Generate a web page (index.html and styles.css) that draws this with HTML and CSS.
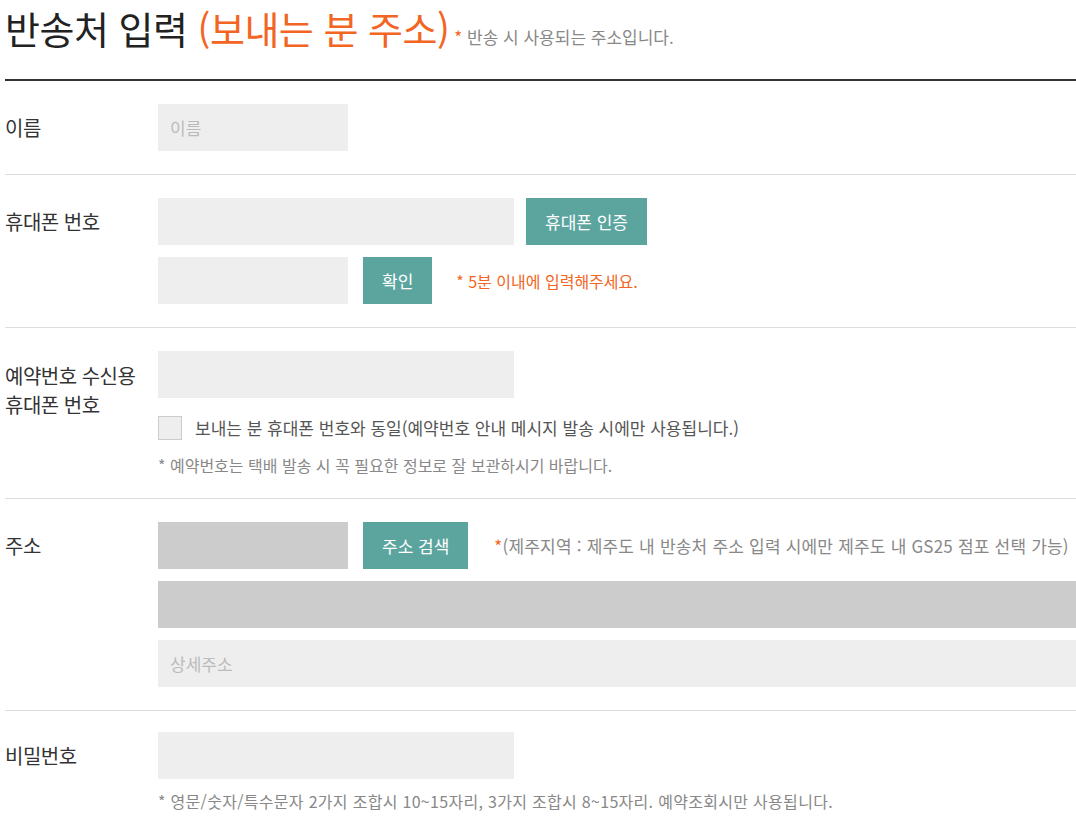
FILE: index.html
```html
<!DOCTYPE html>
<html lang="ko">
<head>
    <meta charset="UTF-8">
    <meta name="viewport" content="width=device-width, initial-scale=1.0">
    <title>반송처 입력</title>
    <link rel="stylesheet" href="styles.css">
</head>
<body>
    <div class="page">
        <div class="title-bar">
            <h2 class="title">반송처 입력 <span class="accent">(보내는 분 주소)</span></h2>
            <span class="title-note"><em>*</em> 반송 시 사용되는 주소입니다.</span>
        </div>

        <div class="row">
            <div class="label">이름</div>
            <div class="field">
                <div class="line">
                    <input class="input short" type="text" placeholder="이름">
                </div>
            </div>
        </div>

        <div class="row">
            <div class="label">휴대폰 번호</div>
            <div class="field">
                <div class="line">
                    <input class="input mid" type="text">
                    <button class="btn">휴대폰 인증</button>
                </div>
                <div class="line">
                    <input class="input short" type="text">
                    <button class="btn gap">확인</button>
                    <span class="warn">* 5분 이내에 입력해주세요.</span>
                </div>
            </div>
        </div>

        <div class="row">
            <div class="label two">예약번호 수신용<br>휴대폰 번호</div>
            <div class="field">
                <div class="line">
                    <input class="input mid" type="text">
                </div>
                <label class="check">
                    <span class="box"></span>
                    보내는 분 휴대폰 번호와 동일(예약번호 안내 메시지 발송 시에만 사용됩니다.)
                </label>
                <p class="note spaced">* 예약번호는 택배 발송 시 꼭 필요한 정보로 잘 보관하시기 바랍니다.</p>
            </div>
        </div>

        <div class="row">
            <div class="label">주소</div>
            <div class="field">
                <div class="line">
                    <input class="input short locked" type="text" readonly>
                    <button class="btn gap">주소 검색</button>
                    <span class="hint"><em>*</em>(제주지역 : 제주도 내 반송처 주소 입력 시에만 제주도 내 GS25 점포 선택 가능)</span>
                </div>
                <div class="line">
                    <input class="input full locked" type="text" readonly>
                </div>
                <div class="line">
                    <input class="input full" type="text" placeholder="상세주소">
                </div>
            </div>
        </div>

        <div class="row last">
            <div class="label">비밀번호</div>
            <div class="field">
                <div class="line">
                    <input class="input mid" type="password">
                </div>
                <p class="note wide">* 영문/숫자/특수문자 2가지 조합시 10~15자리, 3가지 조합시 8~15자리. 예약조회시만 사용됩니다.</p>
            </div>
        </div>
    </div>
</body>
</html>
```

FILE: styles.css
```css
body {
    margin: 0;
    background-color: #fff;
    font-family: "Noto Sans CJK KR", "Noto Sans", sans-serif;
    color: #333;
}

.page {
    margin-left: 5px;
}

.title-bar {
    display: flex;
    align-items: baseline;
    padding: 0 0 23px;
    border-bottom: 2px solid #333;
}

.title {
    margin: 0;
    font-size: 38px;
    font-weight: 400;
    line-height: 56px;
    color: #222;
    letter-spacing: -0.5px;
}

.title .accent {
    color: #f26522;
}

.title-note {
    margin-left: 5px;
    font-size: 17px;
    color: #888;
}

.title-note em,
.hint em {
    font-style: normal;
    color: #f26522;
}

.row {
    display: flex;
    padding: 23px 0;
    border-bottom: 1px solid #ddd;
}

.row.last {
    padding-top: 21px;
}

.label {
    width: 153px;
    flex-shrink: 0;
    font-size: 20px;
    line-height: 47px;
    color: #333;
    letter-spacing: -0.5px;
}

.label.two {
    line-height: 29px;
    padding-top: 10px;
}

.field {
    flex: 1;
    display: flex;
    flex-direction: column;
    gap: 12px;
}

.line {
    display: flex;
    align-items: center;
}

.input {
    height: 47px;
    box-sizing: border-box;
    border: none;
    background-color: #eee;
    padding: 0 12px;
    font-family: inherit;
    font-size: 17px;
    color: #333;
    outline: none;
}

.input::placeholder {
    color: #bbb;
}

.input.short {
    width: 190px;
}

.input.mid {
    width: 356px;
}

.input.full {
    width: 100%;
}

.input.locked {
    background-color: #ccc;
}

.btn {
    height: 47px;
    margin-left: 12px;
    padding: 0 19px;
    border: none;
    background-color: #5ca59f;
    color: #fff;
    font-family: inherit;
    font-size: 17px;
    font-weight: 400;
    cursor: pointer;
}

.btn.gap {
    margin-left: 15px;
}

.warn {
    margin-left: 24px;
    font-size: 16px;
    color: #f26522;
}

.hint {
    margin-left: 26px;
    font-size: 17px;
    color: #888;
    letter-spacing: 0.2px;
}

.check {
    display: flex;
    align-items: center;
    margin-top: 5px;
    font-size: 17px;
    color: #555;
    cursor: pointer;
}

.check .box {
    width: 22px;
    height: 22px;
    margin-right: 13px;
    background-color: #eee;
    border: 1px solid #ccc;
}

.note {
    margin: 0;
    font-size: 16px;
    line-height: 20px;
    color: #888;
}

.note.spaced {
    margin-top: 3px;
}

.note.wide {
    letter-spacing: 0.3px;
}
```
